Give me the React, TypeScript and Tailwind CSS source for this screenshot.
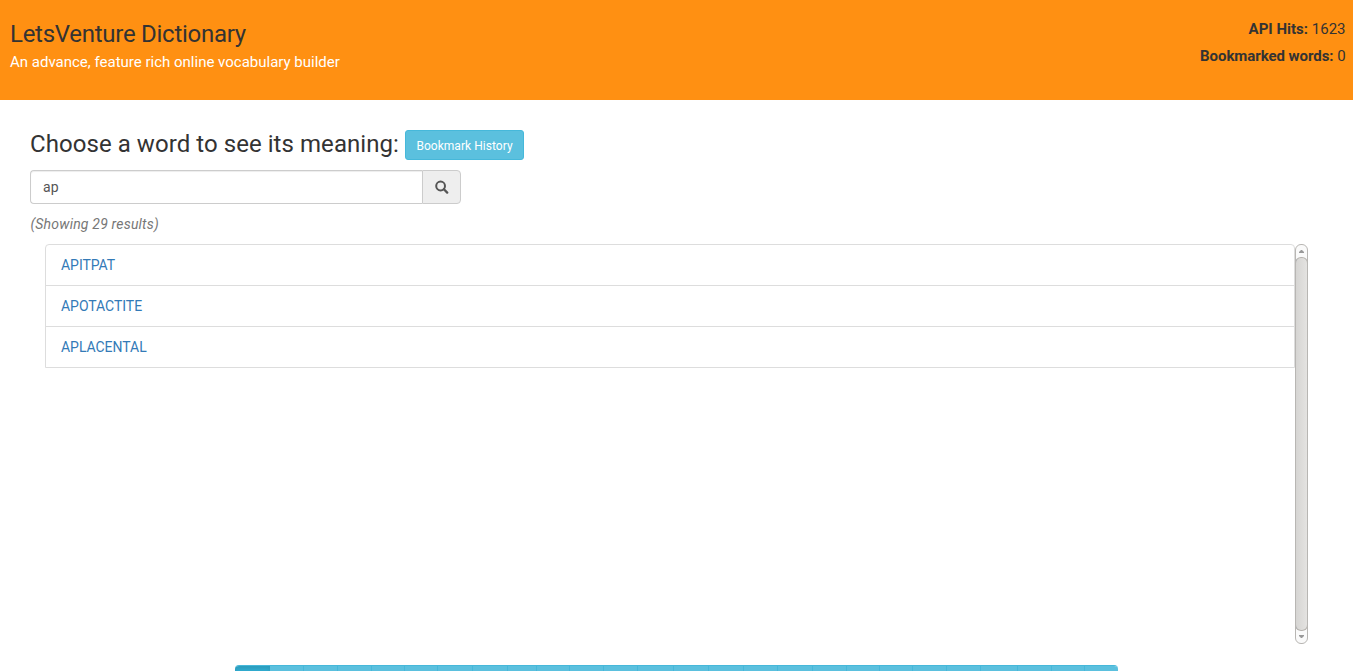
import { useState } from "react";

const words = ["APITPAT", "APOTACTITE", "APLACENTAL"];

const letters: [string, string][] = [
  ["A", "w-[35px]"], ["B", "w-[33px]"], ["C", "w-[34px]"], ["D", "w-[34px]"],
  ["E", "w-[33px]"], ["F", "w-[33px]"], ["G", "w-[35px]"], ["H", "w-[35px]"],
  ["I", "w-[29px]"], ["J", "w-[33px]"], ["K", "w-[34px]"], ["L", "w-[34px]"],
  ["M", "w-[36px]"], ["N", "w-[35px]"], ["O", "w-[35px]"], ["P", "w-[34px]"],
  ["Q", "w-[35px]"], ["R", "w-[34px]"], ["S", "w-[33px]"], ["T", "w-[33px]"],
  ["U", "w-[34px]"], ["V", "w-[34px]"], ["W", "w-[37px]"], ["X", "w-[34px]"],
  ["Y", "w-[33px]"], ["Z", "w-[34px]"],
];

function Header() {
  return (
    <header className="flex h-[100px] shrink-0 justify-between bg-[#ff9012] pr-[7.5px] pl-2.5 text-[#333]">
      <div className="pt-[21px]">
        <h1 className="text-[24px] leading-[27px] tracking-[-0.27px]">LetsVenture Dictionary</h1>
        <p className="pt-1 text-[15px] leading-[21px] text-white">
          An advance, feature rich online vocabulary builder
        </p>
      </div>
      <div className="pt-4 text-right text-[15px] leading-[27px]">
        <p><b>API Hits:</b> 1623</p>
        <p className="tracking-[-0.06px]"><b>Bookmarked words:</b> 0</p>
      </div>
    </header>
  );
}

function SearchBox() {
  const [query, setQuery] = useState("ap");
  return (
    <div className="mt-2.5 flex h-[34px] w-[431px]">
      <input
        value={query}
        onChange={(e) => setQuery(e.target.value)}
        className="w-[392px] rounded-l-[4px] border border-r-0 border-[#ccc] px-3 text-[14px] tracking-[0.2px] text-[#555] shadow-[inset_0_1px_1px_rgba(0,0,0,0.075)] outline-none"
      />
      <button className="flex flex-1 items-center justify-center rounded-r-[4px] border border-[#ccc] bg-[#eee] text-[#555]">
        <svg width="14" height="14" viewBox="0 0 14 14" fill="none" stroke="currentColor">
          <circle cx="5.6" cy="6" r="4.4" strokeWidth="2" />
          <path d="M8.9 9.3 12.2 12.6" strokeWidth="2.3" strokeLinecap="round" />
        </svg>
      </button>
    </div>
  );
}

function ScrollTrack() {
  return (
    <div className="flex h-[400px] w-[13px] flex-col overflow-hidden rounded-[6px] border border-[#b8b6b3] bg-[#fafafa]">
      <div className="flex h-3 shrink-0 items-center justify-center pt-px">
        <svg width="5" height="3" viewBox="0 0 5 3"><path d="M0 3V2L2 0H3L5 2V3Z" fill="#999" /></svg>
      </div>
      <div className="-mx-px flex-1 rounded-[6px] border border-[#b5b2ae] border-l-[#aaa] bg-linear-to-r from-[#d6d5d3] to-[#e4e3e1]" />
      <div className="flex h-3 shrink-0 items-center justify-center pb-px">
        <svg width="5" height="3" viewBox="0 0 5 3"><path d="M0 0V1L2 3H3L5 1V0Z" fill="#999" /></svg>
      </div>
    </div>
  );
}

export default function App() {
  return (
    <div className="flex h-[671px] flex-col overflow-hidden bg-white font-[Roboto,sans-serif] text-[#333]">
      <Header />
      <main className="px-[30px] pt-[30px]">
        <div className="flex h-[30px] items-center">
          <h2 className="w-[375px] pb-px text-[24px] leading-[27px] tracking-[0.06px] whitespace-nowrap">
            Choose a word to see its meaning:
          </h2>
          <button className="h-[30px] w-[119px] rounded-[3px] border border-[#46b8da] bg-[#5bc0de] pt-px text-[12px] leading-[18px] tracking-[0.04px] whitespace-nowrap text-white">
            Bookmark History
          </button>
        </div>
        <SearchBox />
        <p className="mt-2.5 pl-[0.5px] text-[14px] leading-5 tracking-[0.2px] text-[#777] italic">(Showing 29 results)</p>
        <div className="mt-2.5 ml-[15px] flex h-[400px] w-[1263px]">
          <ul className="h-[124px] flex-1 divide-y divide-[#ddd] rounded-t-[4px] border border-[#ddd]">
            {words.map((word) => (
              <li key={word} className="h-[41px] px-[15px] pt-2.5 text-[14px] leading-5 tracking-[-0.04px] text-[#337ab7]">
                {word}
              </li>
            ))}
          </ul>
          <ScrollTrack />
        </div>
      </main>
      <nav className="mx-auto mt-[21px] flex h-[34px] w-[883px] shrink-0 overflow-hidden rounded-[4px] border-t border-[#46b8da]">
        {letters.map(([letter, width], i) => (
          <button
            key={letter}
            aria-label={letter}
            className={`${width} shrink-0 ${
              i === 0
                ? "bg-[#31b0d5] shadow-[inset_0_3px_5px_rgba(0,0,0,0.125)]"
                : i === 1
                  ? "bg-[#5bc0de]"
                  : "border-l border-[#46b8da] bg-[#5bc0de]"
            }`}
          />
        ))}
      </nav>
    </div>
  );
}
